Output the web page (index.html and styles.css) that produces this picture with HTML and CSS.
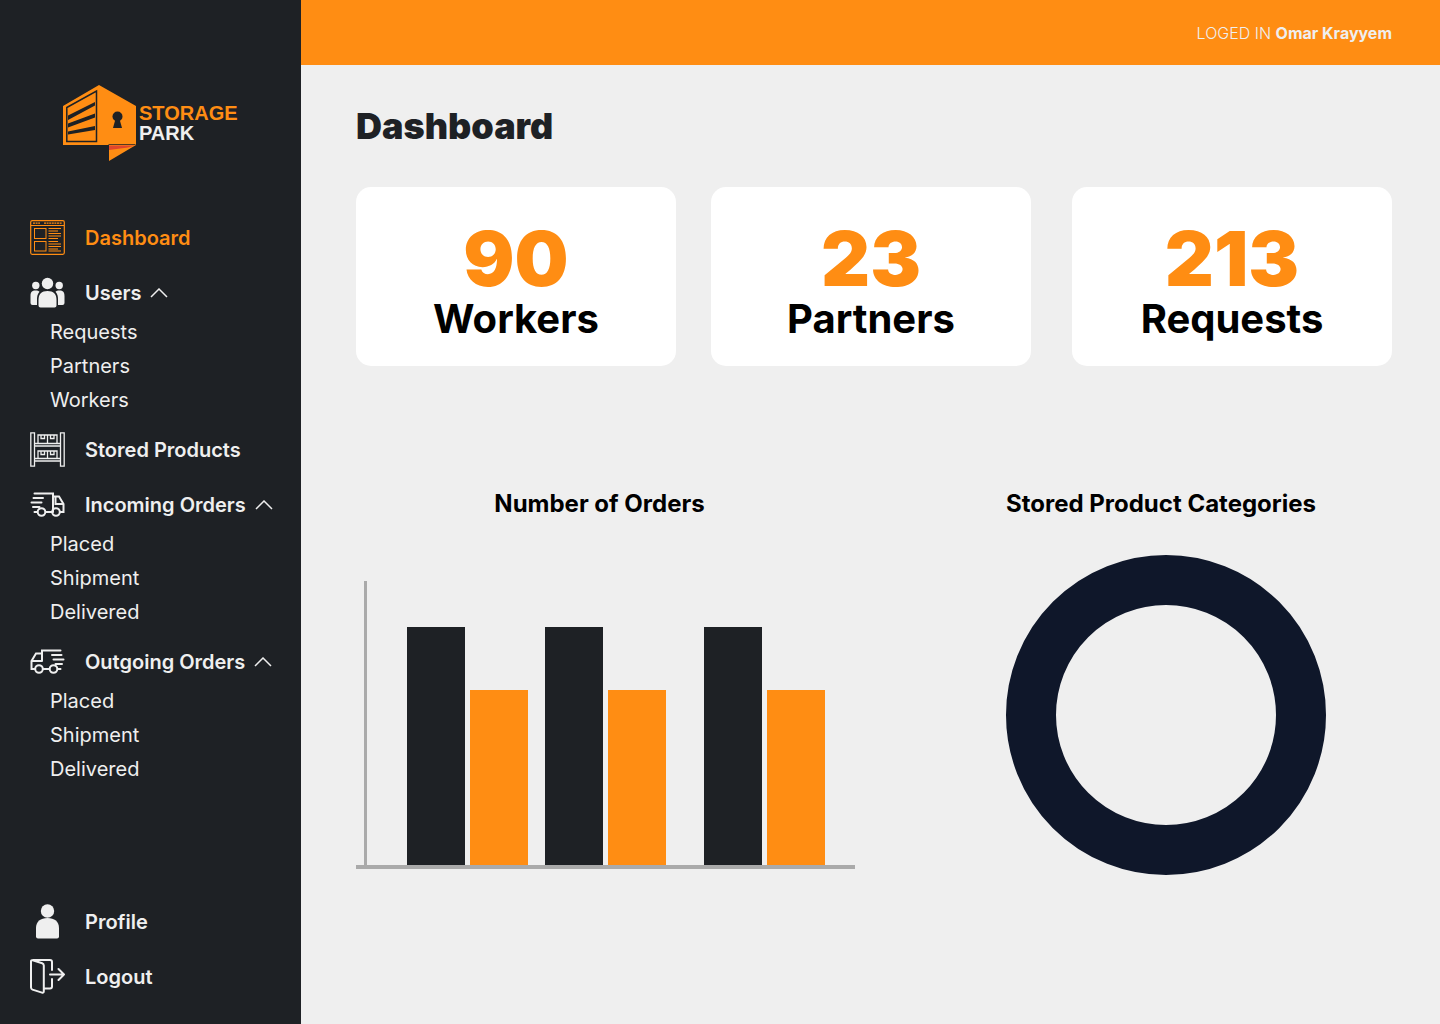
FILE: index.html
```html
<!DOCTYPE html>
<html lang="en">
<head>
<meta charset="utf-8">
<meta name="viewport" content="width=device-width, initial-scale=1">
<title>Storage Park - Dashboard</title>
<link rel="stylesheet" href="styles.css">
</head>
<body>
<div class="app">
  <aside class="sidebar">
    <a class="logo" href="#" aria-label="Storage Park">
      <svg class="logo-mark" viewBox="0 0 73 76" aria-hidden="true">
        <path fill="#ff8d13" d="M0 21 36 0l37 21v39L46 76V60H0z"/>
        <path fill="#e2452c" d="M46 60.500h26l-7 2-19 2.500z"/>
        <path fill="none" stroke="#1e2125" stroke-width="1.500" d="M3.800 22.500 33.500 6v50.500H3.800z"/>
        <path fill="#1e2125" d="M5 30.500 32 17v3.500L5 35zM5 38.500l27-10v4L5 42.500zM5 46.500l27-5.500v4L5 49.500zM45.500 60h27v-.7h-27z"/>
        <circle cx="54.500" cy="31.500" r="5" fill="#1e2125"/>
        <path fill="#1e2125" d="M52.500 34h4l2.500 9h-9z"/>
      </svg>
      <span class="logo-text"><span class="logo-accent">STORAGE</span><span>PARK</span></span>
    </a>

    <nav class="nav" aria-label="Main">
      <a class="nav-item active" href="#" aria-current="page">
        <svg class="icon" viewBox="0 0 35 35" fill="none" stroke="currentColor" aria-hidden="true">
          <rect x=".7" y=".7" width="33.600" height="33.600" rx="1.500" stroke-width="1.200"/>
          <path d="M1 5.500h33" stroke-width="1"/>
          <path d="M3 3.200h7M14 3.200h18" stroke-width="1.200" stroke-dasharray="2 .6"/>
          <rect x="4.500" y="8.500" width="11.500" height="10"/>
          <rect x="4.500" y="21.500" width="11.500" height="9.500"/>
          <path d="M18.500 8.500H31M18.500 11H28M18.500 13.500H31M18.500 16H31M18.500 18.500H28M18.500 21.500H28M18.500 24H31M18.500 26.500H31M18.500 29H28M18.500 31H31" stroke-width="1.200"/>
        </svg>
        <span>Dashboard</span>
      </a>

      <div class="nav-group">
        <button class="nav-item" type="button" aria-expanded="true">
          <svg class="icon" viewBox="0 0 35 35" fill="currentColor" aria-hidden="true">
            <circle cx="17.500" cy="8.500" r="5.700"/>
            <circle cx="5.800" cy="10.500" r="3.700"/>
            <circle cx="29.200" cy="10.500" r="3.700"/>
            <path d="M8.500 25c0-6 3-9 9-9s9 3 9 9v5.500q0 2-2 2h-14q-2 0-2-2zM.5 21c0-4 1.500-5.500 5-5.500 2 0 3.300.4 4 1.200C7.500 19 7 21.500 7 24v6H2.500q-2 0-2-2zM34.500 21c0-4-1.500-5.500-5-5.500-2 0-3.300.4-4 1.200 2 2.300 2.500 4.800 2.500 7.300v6h4.500q2 0 2-2z"/>
          </svg>
          <span>Users</span>
          <svg class="chevron" viewBox="0 0 18 10" aria-hidden="true"><path d="m1 9 8-8 8 8"/></svg>
        </button>
        <ul class="subnav">
          <li><a href="#">Requests</a></li>
          <li><a href="#">Partners</a></li>
          <li><a href="#">Workers</a></li>
        </ul>
      </div>

      <a class="nav-item" href="#">
        <svg class="icon" viewBox="0 0 35 35" fill="none" stroke="currentColor" stroke-width="1.300" aria-hidden="true">
          <path d="M.8.800h3.700v33.400H.8zM30.500.800h3.700v33.400h-3.700zM4.500 11.500h26V14h-26zM4.500 26.500h26V29h-26zM8 11.500V3h19v8.500M17.500 3v8.500M8 26.500V19h19v7.500M17.500 19v7.500M11 3v3.500h3.500V3M20.500 3v3.500H24V3M11 19v3.500h3.500V19M20.500 19v3.500H24V19"/>
        </svg>
        <span>Stored Products</span>
      </a>

      <div class="nav-group">
        <button class="nav-item" type="button" aria-expanded="true">
          <svg class="icon" viewBox="0 0 35 35" fill="none" stroke="currentColor" stroke-width="2" stroke-linecap="round" aria-hidden="true">
            <path d="M4.500 6.500H23v18.500M4.500 25H7m9 0h6m8 0h3.500v-8L29 9.500h-6M25.500 10v7h7.500M3.500 11h9.500M1.500 15.500h10M3 20h6.500"/>
            <circle cx="11.500" cy="25" r="3.800"/>
            <circle cx="26" cy="25" r="3.800"/>
          </svg>
          <span>Incoming Orders</span>
          <svg class="chevron" viewBox="0 0 18 10" aria-hidden="true"><path d="m1 9 8-8 8 8"/></svg>
        </button>
        <ul class="subnav">
          <li><a href="#">Placed</a></li>
          <li><a href="#">Shipment</a></li>
          <li><a href="#">Delivered</a></li>
        </ul>
      </div>

      <div class="nav-group">
        <button class="nav-item" type="button" aria-expanded="true">
          <svg class="icon" viewBox="0 0 35 35" fill="none" stroke="currentColor" stroke-width="2" stroke-linecap="round" aria-hidden="true">
            <path d="M30.500 6.500H12V17M30.500 25H28m-9 0h-6m-8 0H1.500v-8L6 9.500h6M12 17H2.500M22 11h9.500M23.500 15.500h10M25.500 20H32"/>
            <circle cx="23.500" cy="25" r="3.800"/>
            <circle cx="9" cy="25" r="3.800"/>
          </svg>
          <span>Outgoing Orders</span>
          <svg class="chevron" viewBox="0 0 18 10" aria-hidden="true"><path d="m1 9 8-8 8 8"/></svg>
        </button>
        <ul class="subnav">
          <li><a href="#">Placed</a></li>
          <li><a href="#">Shipment</a></li>
          <li><a href="#">Delivered</a></li>
        </ul>
      </div>
    </nav>

    <nav class="nav account" aria-label="Account">
      <a class="nav-item" href="#">
        <svg class="icon" viewBox="0 0 35 35" fill="currentColor" aria-hidden="true">
          <circle cx="17.500" cy="7" r="6.700"/>
          <path d="M6 24c0-6.500 4.500-10 11.500-10S29 17.500 29 24v8.500q0 2-2 2H8q-2 0-2-2z"/>
        </svg>
        <span>Profile</span>
      </a>
      <a class="nav-item" href="#">
        <svg class="icon" viewBox="0 0 35 35" fill="none" stroke="currentColor" stroke-width="2" stroke-linecap="round" stroke-linejoin="round" aria-hidden="true">
          <path d="M1 2.500q0-1.700 1.700-1.200l9.500 3q1.600.6 1.600 2.200v25.700q0 2-1.800 1.400l-9.500-3Q1 30 1 28.500zM3 1h17q2 0 2 2v8M22 20v7.500q0 2-2 2h-6M20 15.500h14M28.500 10l5.500 5.500-5.500 5.500"/>
        </svg>
        <span>Logout</span>
      </a>
    </nav>
  </aside>

  <div class="page">
    <header class="topbar">
      <p class="user">LOGED IN <strong>Omar Krayyem</strong></p>
    </header>
    <main class="content">
      <h1>Dashboard</h1>
      <section class="stats" aria-label="Totals">
        <div class="card"><strong>90</strong><span>Workers</span></div>
        <div class="card"><strong>23</strong><span>Partners</span></div>
        <div class="card"><strong>213</strong><span>Requests</span></div>
      </section>
      <div class="charts">
        <section class="orders">
          <h2>Number of Orders</h2>
          <svg class="bar-chart" viewBox="0 0 499 288" role="img" aria-label="Bar chart of orders">
            <path fill="#aaa" d="M8 0h3v285H8z"/>
            <path fill="#1e2125" d="M51 46h58v238H51zM189 46h58v238h-58zM348 46h58v238h-58z"/>
            <path fill="#ff8d13" d="M114 109h58v175h-58zM252 109h58v175h-58zM411 109h58v175h-58z"/>
            <path fill="#aaa" d="M0 284h499v4H0z"/>
          </svg>
        </section>
        <section class="categories">
          <h2>Stored Product Categories</h2>
          <svg class="donut" viewBox="0 0 320 320" role="img" aria-label="Donut chart of product categories">
            <circle cx="160" cy="160" r="135" fill="none" stroke="#0f172a" stroke-width="50"/>
          </svg>
        </section>
      </div>
    </main>
  </div>
</div>
</body>
</html>
```
FILE: styles.css
```css
* {
  box-sizing: border-box;
}

body,
h1,
h2,
p,
ul {
  margin: 0;
  padding: 0;
}

body {
  font-family: Inter, "Liberation Sans", sans-serif;
  background: #efefef;
  color: #000;
}

a {
  color: inherit;
  text-decoration: none;
}

.app {
  display: flex;
  min-height: 100vh;
}

.sidebar {
  display: flex;
  flex-direction: column;
  flex: none;
  width: 301px;
  padding: 85px 20px 30px 30px;
  background: #1e2125;
  color: #efefef;
}

.logo {
  display: flex;
  align-items: center;
  gap: 3px;
  margin: 0 0 59px 33px;
}

.logo-mark {
  width: 73px;
  height: 76px;
}

.logo-text {
  display: flex;
  flex-direction: column;
  font: bold 20px/20px "Liberation Sans", Arial, sans-serif;
}

.logo-accent {
  color: #ff8d13;
}

.nav {
  display: flex;
  flex-direction: column;
  gap: 20px;
}

.account {
  margin-top: auto;
}

.nav-item {
  display: flex;
  align-items: center;
  height: 35px;
  padding: 0;
  border: 0;
  background: none;
  color: inherit;
  font: 600 20px/24px Inter, "Liberation Sans", sans-serif;
  white-space: nowrap;
  cursor: pointer;
}

.active {
  color: #ff8d13;
}

.icon {
  flex: none;
  width: 35px;
  height: 35px;
  margin-right: 20px;
}

.chevron {
  width: 18px;
  height: 10px;
  margin-left: 9px;
  fill: none;
  stroke: currentColor;
  stroke-width: 1.5;
}

.subnav {
  display: flex;
  flex-direction: column;
  gap: 10px;
  margin-top: 10px;
  padding-left: 20px;
  list-style: none;
  font-size: 20px;
  line-height: 24px;
}

.page {
  flex: 1;
  min-width: 0;
}

.topbar {
  display: flex;
  justify-content: flex-end;
  align-items: center;
  height: 65px;
  padding: 0 48px;
  background: #ff8d13;
  color: #efefef;
}

.user {
  font-size: 16px;
  font-weight: 300;
}

.user strong {
  font-weight: 700;
}

.content {
  padding: 39px 48px 40px 55px;
}

h1 {
  color: #1e2125;
  font-size: 36px;
  font-weight: 900;
  line-height: 44px;
}

.stats {
  display: grid;
  grid-template-columns: 355fr 361fr 320fr;
  margin-top: 39px;
}

.card {
  display: flex;
  flex-direction: column;
  align-items: center;
  width: 320px;
  max-width: 100%;
  padding: 25px 0 23px;
  border-radius: 15px;
  background: #fff;
}

.card strong {
  color: #ff8d13;
  font-size: 76px;
  font-weight: 900;
  line-height: 92px;
}

.card span {
  margin-top: -9px;
  font-size: 40px;
  font-weight: 700;
  line-height: 48px;
}

.charts {
  display: flex;
  justify-content: space-between;
  gap: 40px;
  margin-top: 123px;
  padding-right: 66px;
}

h2 {
  font-size: 24px;
  font-weight: 700;
  line-height: 30px;
}

.orders {
  flex: 0 1 499px;
}

.orders h2 {
  padding-right: 12px;
  text-align: center;
}

.bar-chart {
  display: block;
  width: 100%;
  margin-top: 62px;
}

.categories {
  flex: 0 1 320px;
}

.donut {
  display: block;
  width: 100%;
  margin-top: 36px;
}
```
